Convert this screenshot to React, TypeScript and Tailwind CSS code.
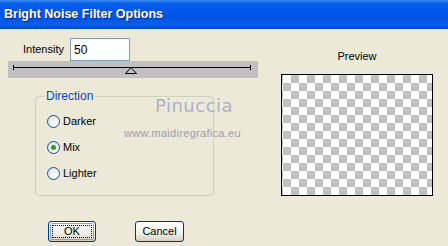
import React from 'react';

const font = { fontFamily: '"Liberation Sans", Arial, sans-serif' };

function Radio({ label, checked }: { label: string; checked?: boolean }) {
  return (
    <div className="flex items-center h-[13px]">
      <span className="w-[13px] h-[13px] rounded-full border border-[#1c5180] bg-[radial-gradient(circle_at_70%_70%,#ffffff,#dcdcd6)] flex items-center justify-center">
        {checked && <span className="w-[5px] h-[5px] rounded-full bg-[#21a121]" />}
      </span>
      <span className="ml-[3px] text-[11px] text-black leading-none">{label}</span>
    </div>
  );
}

export default function App() {
  return (
    <div className="w-[448px] h-[246px] bg-[#ece9d8] overflow-hidden relative" style={font}>
      <div className="h-[29px] bg-[linear-gradient(to_bottom,#3d8ff5_0px,#0a62e8_3px,#0058ee_8px,#0054e3_18px,#0a5ee8_25px,#0046c8_29px)] flex items-center pl-[4px]">
        <span className="text-white font-bold text-[12.5px] [text-shadow:1px_1px_0_#0a2a8a]">
          Bright Noise Filter Options
        </span>
      </div>

      <div className="flex">
        {/* left column */}
        <div className="w-[270px] pt-[9px]">
          <div className="flex items-center pl-[23px]">
            <span className="text-[11px] text-black">Intensity</span>
            <div className="ml-[6px] w-[60px] h-[23px] bg-white border border-[#7f9db9] flex items-center pl-[3px] text-[12px] text-black">
              50
            </div>
          </div>

          <div className="ml-[8px] w-[250px] h-[17px] bg-[#c0c0c0] relative">
            <div className="absolute left-[5px] right-[7px] top-[6px] h-px bg-black" />
            <div className="absolute left-[5px] top-[4px] w-px h-[5px] bg-black" />
            <div className="absolute right-[7px] top-[4px] w-px h-[5px] bg-black" />
            <svg className="absolute left-[117px] top-[6px]" width="12" height="7" viewBox="0 0 12 7">
              <path d="M6 0.5 L11.5 6.5 L0.5 6.5 Z" fill="#c0c0c0" stroke="black" strokeWidth="1" />
            </svg>
          </div>

          <div className="ml-[35px] mt-[18px] w-[179px] h-[100px] border border-[#d0d0bf] rounded-[4px] relative">
            <span className="absolute -top-[8px] left-[8px] px-[2px] bg-[#ece9d8] text-[12px] text-[#0046d5] leading-[14px]">
              Direction
            </span>
            <div className="flex flex-col gap-[13px] pl-[11px] pt-[18px]">
              <Radio label="Darker" />
              <Radio label="Mix" checked />
              <Radio label="Lighter" />
            </div>
          </div>

          <div className="flex mt-[25px]">
            <button className="ml-[48px] w-[48px] h-[21px] rounded-[3px] border border-[#003c74] bg-[linear-gradient(to_bottom,#ffffff,#f0f0ea_60%,#d6d0c5)] p-[1px]">
              <span className="flex items-center justify-center w-full h-full border border-[#7aa6e6] rounded-[2px] outline outline-1 outline-dotted outline-black -outline-offset-[3px] text-[11px] text-black">
                OK
              </span>
            </button>
            <button className="ml-[39px] w-[49px] h-[21px] rounded-[3px] border border-[#003c74] bg-[linear-gradient(to_bottom,#ffffff,#f0f0ea_60%,#d6d0c5)] text-[11px] text-black flex items-center justify-center">
              Cancel
            </button>
          </div>
        </div>

        {/* right column */}
        <div className="pl-[11px] pt-[20px]">
          <div className="w-[152px] text-center text-[11px] text-black leading-[14px]">Preview</div>
          <div className="mt-[11px] w-[152px] h-[122px] border border-black bg-[conic-gradient(#c0c0c0_25%,#ffffff_0_50%,#c0c0c0_0_75%,#ffffff_0)] bg-[length:16px_16px] bg-[position:1px_0px]" />
        </div>
      </div>

      {/* watermark */}
      <div className="absolute left-[124px] top-[95px] flex flex-col items-start pointer-events-none">
        <span className="ml-[31px] text-[18px] leading-[22px] tracking-[0.5px] text-[#b0b0c8]" style={{ fontFamily: '"DejaVu Sans", sans-serif' }}>
          Pinuccia
        </span>
        <span className="mt-[10px] text-[11px] leading-[12px] tracking-[0.3px] text-[#9c9cae]">www.maidiregrafica.eu</span>
      </div>
    </div>
  );
}
